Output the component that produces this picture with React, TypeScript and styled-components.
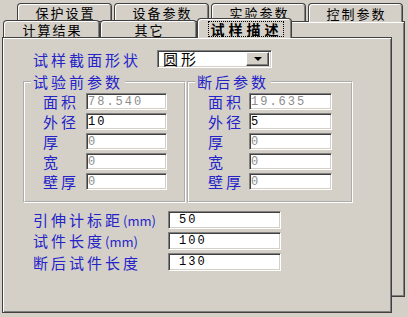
import styled, { createGlobalStyle, css } from "styled-components";

const GlobalStyle = createGlobalStyle`
  html, body {
    margin: 0;
    padding: 0;
  }
  body {
    background: #d4d0c8;
    font-family: "Noto Sans CJK SC", "Noto Sans", sans-serif;
  }
  * {
    box-sizing: border-box;
  }
`;

const Deck = styled.div`
  display: grid;
  width: 408px;
  height: 317px;
  overflow: hidden;
`;

const Layer = styled.div<{ $back?: boolean }>`
  grid-area: 1 / 1;
  display: flex;
  flex-direction: column;
  ${(p) =>
    p.$back
      ? css`
          margin: 3px 0 0 16px;
          width: 389px;
          height: 294px;
        `
      : css`
          margin: 18px 0 0 2px;
          width: 390px;
          height: 295px;
        `}
`;

const TabRow = styled.div<{ $h: number; $gap: number }>`
  display: flex;
  align-items: flex-end;
  height: ${(p) => p.$h}px;
  gap: ${(p) => p.$gap}px;
  padding-left: 1px;
`;

const Tab = styled.div<{ $w: number; $h: number; $open?: boolean }>`
  position: relative;
  z-index: ${(p) => (p.$open ? 1 : 0)};
  display: flex;
  align-items: center;
  justify-content: center;
  width: ${(p) => p.$w}px;
  height: ${(p) => p.$h}px;
  margin-bottom: ${(p) => (p.$open ? -1 : 0)}px;
  padding-left: 2px;
  border: 1px solid #404040;
  border-bottom: none;
  border-radius: 4px 4px 0 0;
  box-shadow: inset 1px 1px #fff, inset -1px 0 #808080;
  background: #d4d0c8;
  color: #000;
  font-size: 13px;
  line-height: 13px;
  letter-spacing: 2px;
  white-space: nowrap;
`;

const Focused = styled.span`
  padding: 0 0 0 2px;
  outline: 1px dotted #000;
  font-weight: bold;
  font-size: 14px;
  letter-spacing: 4px;
  line-height: 14px;
`;

const Page = styled.div<{ $pad?: boolean }>`
  flex: 1;
  display: flex;
  flex-direction: column;
  padding: ${(p) => (p.$pad ? "12px 0 0 20px" : "0")};
  border: 1px solid #404040;
  box-shadow: inset 1px 1px #fff, inset -1px -1px #808080;
  background: #d4d0c8;
`;

const Label = styled.span<{ $w: number }>`
  flex: none;
  width: ${(p) => p.$w}px;
  color: #2323c8;
  font-size: 15px;
  letter-spacing: 3px;
  line-height: 17px;
  white-space: nowrap;
`;

const Unit = styled.span`
  font-size: 13px;
  letter-spacing: 0;
`;

const ShapeRow = styled.div`
  display: flex;
  align-items: center;
  height: 18px;
  padding-left: 10px;
`;

const Combo = styled.div`
  display: flex;
  align-items: center;
  justify-content: space-between;
  width: 115px;
  height: 18px;
  padding: 2px;
  border: 1px solid;
  border-color: #808080 #fff #fff #808080;
  box-shadow: inset 1px 1px #404040, inset -1px -1px #d4d0c8;
  background: #fff;
`;

const ComboText = styled.span`
  padding-left: 3px;
  color: #000;
  font-size: 15px;
  letter-spacing: 3px;
  line-height: 14px;
`;

const ComboButton = styled.div`
  display: flex;
  align-items: center;
  justify-content: center;
  width: 23px;
  height: 14px;
  border: 1px solid;
  border-color: #fff #404040 #404040 #fff;
  box-shadow: inset -1px -1px #808080;
  background: #d4d0c8;
`;

const Arrow = styled.span`
  width: 0;
  height: 0;
  border-left: 4px solid transparent;
  border-right: 4px solid transparent;
  border-top: 4px solid #000;
`;

const Groups = styled.div`
  display: flex;
  gap: 1px;
  margin-top: 13px;
`;

const Group = styled.section<{ $w: number }>`
  position: relative;
  width: ${(p) => p.$w}px;
  height: 122px;
  border: 2px groove #fff;
`;

/* caption sits over the etched frame line, like a legend */
const Caption = styled.span`
  position: absolute;
  top: -10px;
  left: 6px;
  padding: 0 2px;
  background: #d4d0c8;
  color: #2323c8;
  font-size: 15px;
  letter-spacing: 3px;
  line-height: 17px;
  white-space: nowrap;
`;

const FieldList = styled.div<{ $left: number }>`
  display: flex;
  flex-direction: column;
  gap: 3px;
  padding: 10px 0 0 ${(p) => p.$left}px;
`;

const FieldRow = styled.div<{ $h: number }>`
  display: flex;
  align-items: center;
  height: ${(p) => p.$h}px;
`;

const Entry = styled.input<{ $w: number; $dim?: boolean; $indent?: number }>`
  flex: none;
  width: ${(p) => p.$w}px;
  height: 100%;
  margin: 0;
  padding: 0 0 0 ${(p) => p.$indent ?? 1}px;
  border: 1px solid;
  border-color: #808080 #fff #fff #808080;
  box-shadow: inset 1px 1px #404040, inset -1px -1px #d4d0c8;
  background: #fff;
  color: ${(p) => (p.$dim ? "#8c8c8c" : "#000")};
  font-family: "Liberation Mono", "DejaVu Sans Mono", monospace;
  font-size: 12px;
  letter-spacing: 2px;
  outline: none;
`;

const Extras = styled.div`
  display: flex;
  flex-direction: column;
  gap: 3px;
  margin-top: 8px;
  padding-left: 10px;
`;

type Field = { name: string; value: string; dim?: boolean };

const before: Field[] = [
  { name: "面积", value: "78.540", dim: true },
  { name: "外径", value: "10" },
  { name: "厚", value: "0", dim: true },
  { name: "宽", value: "0", dim: true },
  { name: "壁厚", value: "0", dim: true },
];

const after: Field[] = [
  { name: "面积", value: "19.635", dim: true },
  { name: "外径", value: "5" },
  { name: "厚", value: "0", dim: true },
  { name: "宽", value: "0", dim: true },
  { name: "壁厚", value: "0", dim: true },
];

function ParamGroup({ title, fields, width, left, labelW, inputW }: {
  title: string;
  fields: Field[];
  width: number;
  left: number;
  labelW: number;
  inputW: number;
}) {
  return (
    <Group $w={width}>
      <Caption>{title}</Caption>
      <FieldList $left={left}>
        {fields.map((f) => (
          <FieldRow key={f.name} $h={17}>
            <Label $w={labelW}>{f.name}</Label>
            <Entry $w={inputW} $dim={f.dim} value={f.value} readOnly />
          </FieldRow>
        ))}
      </FieldList>
    </Group>
  );
}

export default function App() {
  return (
    <>
      <GlobalStyle />
      <Deck>
        <Layer $back>
          <TabRow $h={18} $gap={2}>
            <Tab $w={95} $h={18}>保护设置</Tab>
            <Tab $w={95} $h={18}>设备参数</Tab>
            <Tab $w={95} $h={18}>实验参数</Tab>
            <Tab $w={95} $h={19} $open>控制参数</Tab>
          </TabRow>
          <Page />
        </Layer>

        <Layer>
          <TabRow $h={19} $gap={0}>
            <Tab $w={97} $h={17}>计算结果</Tab>
            <Tab $w={97} $h={17}>其它</Tab>
            <Tab $w={95} $h={20} $open>
              <Focused>试样描述</Focused>
            </Tab>
          </TabRow>
          <Page $pad>
            <ShapeRow>
              <Label $w={124}>试样截面形状</Label>
              <Combo>
                <ComboText>圆形</ComboText>
                <ComboButton>
                  <Arrow />
                </ComboButton>
              </Combo>
            </ShapeRow>

            <Groups>
              <ParamGroup title="试验前参数" fields={before} width={163} left={18} labelW={43} inputW={81} />
              <ParamGroup title="断后参数" fields={after} width={166} left={19} labelW={41} inputW={83} />
            </Groups>

            <Extras>
              <FieldRow $h={18}>
                <Label $w={135}>引伸计标距<Unit>(mm)</Unit></Label>
                <Entry $w={113} $indent={10} value="50" readOnly />
              </FieldRow>
              <FieldRow $h={18}>
                <Label $w={135}>试件长度<Unit>(mm)</Unit></Label>
                <Entry $w={113} $indent={10} value="100" readOnly />
              </FieldRow>
              <FieldRow $h={18}>
                <Label $w={135}>断后试件长度</Label>
                <Entry $w={113} $indent={10} value="130" readOnly />
              </FieldRow>
            </Extras>
          </Page>
        </Layer>
      </Deck>
    </>
  );
}
